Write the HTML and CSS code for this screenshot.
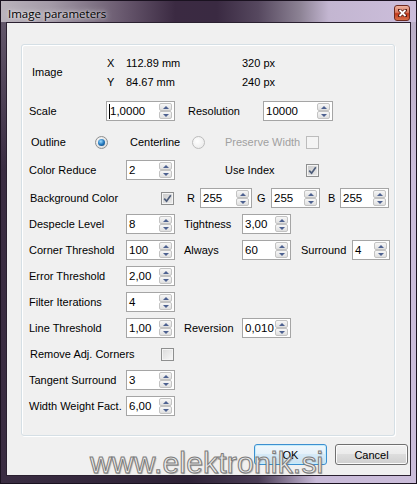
FILE: index.html
```html
<!DOCTYPE html>
<html>
<head>
<meta charset="utf-8">
<link rel="stylesheet" href="styles.css">
</head>
<body>
<div class="window">
  <div class="titlebar">
    <span class="title">Image parameters</span>
    <div class="close"><svg width="9" height="8" viewBox="0 0 9 8"><path d="M1.5 1 L7.5 7 M7.5 1 L1.5 7" stroke="#5a1d12" stroke-width="3.4" stroke-linecap="square"/><path d="M1.5 1 L7.5 7 M7.5 1 L1.5 7" stroke="#ffffff" stroke-width="1.8"/></svg></div>
  </div>
  <div class="client">
    <div class="group">
      <div class="imgblock">
        <div class="imglabel">Image</div>
        <div class="imglines">
          <div class="imgline"><span class="axis">X</span><span class="mm">112.89 mm</span><span>320 px</span></div>
          <div class="imgline"><span class="axis">Y</span><span class="mm">84.67 mm</span><span>240 px</span></div>
        </div>
      </div>

      <div class="row r-scale">
        <span class="lbl w77">Scale</span>
        <div class="spin w69"><span class="val"><i class="caret"></i>1,0000</span><span class="arrows"><b class="up"></b><b class="dn"></b></span></div>
        <span class="lbl w75 ml13">Resolution</span>
        <div class="spin w70"><span class="val">10000</span><span class="arrows"><b class="up"></b><b class="dn"></b></span></div>
      </div>

      <div class="row r-outline">
        <span class="lbl w66 pl2">Outline</span>
        <span class="radio on"></span>
        <span class="lbl w62 ml22">Centerline</span>
        <span class="radio dis"></span>
        <span class="lbl w81 ml20 disabled">Preserve Width</span>
        <span class="chk dis"></span>
      </div>

      <div class="row r-cr">
        <span class="lbl w97">Color Reduce</span>
        <div class="spin w49"><span class="val">2</span><span class="arrows"><b class="up"></b><b class="dn"></b></span></div>
        <span class="lbl w81 ml50">Use Index</span>
        <span class="chk on"><svg width="9" height="9" viewBox="0 0 9 9"><path d="M1.2 4.6 L3.6 7.2 L7.8 1.3" fill="none" stroke="#4e5d7a" stroke-width="1.7"/></svg></span>
      </div>

      <div class="row r-bg">
        <span class="lbl w132 pl1">Background Color</span>
        <span class="chk on"><svg width="9" height="9" viewBox="0 0 9 9"><path d="M1.2 4.6 L3.6 7.2 L7.8 1.3" fill="none" stroke="#4e5d7a" stroke-width="1.7"/></svg></span>
        <span class="lbl w13 ml13">R</span>
        <div class="spin w52"><span class="val">255</span><span class="arrows"><b class="up"></b><b class="dn"></b></span></div>
        <span class="lbl w14 ml5">G</span>
        <div class="spin w49"><span class="val">255</span><span class="arrows"><b class="up"></b><b class="dn"></b></span></div>
        <span class="lbl w12 ml8">B</span>
        <div class="spin w49"><span class="val">255</span><span class="arrows"><b class="up"></b><b class="dn"></b></span></div>
      </div>

      <div class="row std">
        <span class="lbl w97">Despecle Level</span>
        <div class="spin w49"><span class="val">8</span><span class="arrows"><b class="up"></b><b class="dn"></b></span></div>
        <span class="lbl w58 ml9">Tightness</span>
        <div class="spin w49"><span class="val">3,00</span><span class="arrows"><b class="up"></b><b class="dn"></b></span></div>
      </div>

      <div class="row std">
        <span class="lbl w97">Corner Threshold</span>
        <div class="spin w49"><span class="val">100</span><span class="arrows"><b class="up"></b><b class="dn"></b></span></div>
        <span class="lbl w58 ml9">Always</span>
        <div class="spin w49"><span class="val">60</span><span class="arrows"><b class="up"></b><b class="dn"></b></span></div>
        <span class="lbl w51 ml10">Surround</span>
        <div class="spin w38"><span class="val">4</span><span class="arrows"><b class="up"></b><b class="dn"></b></span></div>
      </div>

      <div class="row std">
        <span class="lbl w97">Error Threshold</span>
        <div class="spin w49"><span class="val">2,00</span><span class="arrows"><b class="up"></b><b class="dn"></b></span></div>
      </div>

      <div class="row std">
        <span class="lbl w97">Filter Iterations</span>
        <div class="spin w49"><span class="val">4</span><span class="arrows"><b class="up"></b><b class="dn"></b></span></div>
      </div>

      <div class="row std">
        <span class="lbl w97">Line Threshold</span>
        <div class="spin w49"><span class="val">1,00</span><span class="arrows"><b class="up"></b><b class="dn"></b></span></div>
        <span class="lbl w58 ml9">Reversion</span>
        <div class="spin w49"><span class="val">0,010</span><span class="arrows"><b class="up"></b><b class="dn"></b></span></div>
      </div>

      <div class="row std">
        <span class="lbl w132 pl1">Remove Adj. Corners</span>
        <span class="chk"></span>
      </div>

      <div class="row std">
        <span class="lbl w97">Tangent Surround</span>
        <div class="spin w49"><span class="val">3</span><span class="arrows"><b class="up"></b><b class="dn"></b></span></div>
      </div>

      <div class="row std">
        <span class="lbl w97">Width Weight Fact.</span>
        <div class="spin w49"><span class="val">6,00</span><span class="arrows"><b class="up"></b><b class="dn"></b></span></div>
      </div>
    </div>

    <div class="buttons">
      <div class="btn def">OK</div>
      <div class="btn">Cancel</div>
    </div>
  </div>
  <div class="watermark">www.elektronik.si</div>
</div>
</body>
</html>
```

FILE: styles.css
```css
html, body {
  margin: 0;
  padding: 0;
}
body {
  width: 417px;
  height: 484px;
  overflow: hidden;
  font-family: "Liberation Sans", Arial, sans-serif;
  font-size: 11px;
  color: #000;
  background: #1a1220;
}
.window {
  position: relative;
  width: 417px;
  height: 484px;
  box-sizing: border-box;
  border: 1px solid #1a1220;
  padding: 0 5px 7px 5px;
  display: flex;
  flex-direction: column;
  background:
    linear-gradient(180deg, rgba(160,152,168,0.45) 0%, rgba(0,0,0,0) 35%),
    linear-gradient(90deg, #3a2d42 0%, #2e2236 45%, #4a3c55 62%, #c8bad8 76%, #cbbdda 100%);
}
.titlebar {
  height: 21px;
  margin: 0 -5px;
  padding: 0 6px 0 7px;
  display: flex;
  justify-content: space-between;
  align-items: center;
  background: linear-gradient(90deg, #bab3bc 0%, #a39aa7 12%, #66566c 30%, #3b2a42 42%, #3a2a42 52%, #56485f 62%, #8c8294 72%, #c3b6d1 79%, #ccbedb 100%);
}
.title {
  font-family: "Open Sans", "Noto Sans", sans-serif;
  font-size: 11.5px;
  color: #000;
  margin-top: 3px;
  text-shadow: 0 0 6px rgba(255,255,255,0.9), 0 0 3px rgba(255,255,255,0.7);
}
.close {
  align-self: flex-start;
  margin-top: 4px;
  width: 16px;
  height: 16px;
  box-sizing: border-box;
  border: 1px solid #6e2a1f;
  border-radius: 3px;
  background: linear-gradient(#efb4a0 0%, #da7a60 45%, #c3391b 55%, #d9704a 100%);
  display: flex;
  align-items: center;
  justify-content: center;
}
.client {
  flex: 1;
  border: 1px solid #2a2030;
  background: #f0f0f0;
  padding: 21px 0 0 14px;
  display: flex;
  flex-direction: column;
}
.group {
  width: 374px;
  height: 392px;
  box-sizing: border-box;
  border: 1px solid #d5dfe5;
  border-radius: 3px;
  box-shadow: inset 1px 1px 0 #ffffff, 1px 1px 0 #ffffff;
  padding: 8px 0 0 7px;
  display: flex;
  flex-direction: column;
}
.imgblock {
  display: flex;
  align-items: center;
  height: 38px;
}
.imglabel {
  width: 75px;
  padding-left: 3px;
}
.imglines {
  display: flex;
  flex-direction: column;
}
.imgline {
  height: 19px;
  display: flex;
  align-items: center;
}
.axis { width: 19px; }
.mm { width: 116px; }

.row {
  height: 20px;
  display: flex;
  align-items: center;
  flex-shrink: 0;
}
.r-scale { margin-top: 10px; }
.r-outline { margin-top: 11px; }
.r-cr { margin-top: 8px; }
.r-bg { margin-top: 8px; }
.std { margin-top: 6px; }

.lbl {
  box-sizing: border-box;
  white-space: nowrap;
  flex-shrink: 0;
}
.disabled { color: #a0a0a0; }
.w12 { width: 12px; }
.w13 { width: 13px; }
.w14 { width: 14px; }
.w51 { width: 51px; }
.w58 { width: 58px; }
.w62 { width: 62px; }
.w66 { width: 66px; }
.w75 { width: 75px; }
.w77 { width: 77px; }
.w81 { width: 81px; }
.w97 { width: 97px; }
.w132 { width: 132px; }
.pl1 { padding-left: 1px; }
.pl2 { padding-left: 2px; }
.ml5 { margin-left: 5px; }
.ml8 { margin-left: 8px; }
.ml9 { margin-left: 9px; }
.ml10 { margin-left: 10px; }
.ml13 { margin-left: 13px; }
.ml20 { margin-left: 20px; }
.ml22 { margin-left: 22px; }
.ml50 { margin-left: 50px; }

.spin {
  height: 20px;
  box-sizing: border-box;
  border: 1px solid #a5a5a5;
  background: #ffffff;
  display: flex;
  align-items: stretch;
  flex-shrink: 0;
}
.spin.w38 { width: 38px; }
.spin.w49 { width: 49px; }
.spin.w52 { width: 52px; }
.spin.w69 { width: 69px; }
.spin.w70 { width: 70px; }
.val {
  flex: 1;
  display: flex;
  align-items: center;
  padding-left: 2px;
  font-size: 11.5px;
  overflow: hidden;
  white-space: nowrap;
}
.caret {
  display: inline-block;
  width: 1px;
  height: 15px;
  background: #000;
}
.arrows {
  width: 13px;
  margin: 1px 2px 1px 0;
  display: flex;
  flex-direction: column;
}
.arrows b {
  flex: 1;
  box-sizing: border-box;
  border: 1px solid #c3c3c3;
  border-radius: 2px;
  background: linear-gradient(#f7f7f7, #dfdfdf);
  display: flex;
  align-items: center;
  justify-content: center;
}
.arrows b::after {
  content: "";
  width: 0;
  height: 0;
  border-left: 3px solid transparent;
  border-right: 3px solid transparent;
}
.arrows .up::after { border-bottom: 3px solid #4d6190; }
.arrows .dn::after { border-top: 3px solid #4d6190; }

.chk {
  width: 13px;
  height: 13px;
  box-sizing: border-box;
  border: 1px solid #8e8f8f;
  background: linear-gradient(135deg, #dadada, #f8f8f8);
  box-shadow: inset 0 0 0 1px #f4f4f4;
  display: flex;
  align-items: center;
  justify-content: center;
  flex-shrink: 0;
}
.chk.on {
  background: linear-gradient(135deg, #c9c9c9, #ececec);
}
.chk.dis {
  border-color: #bcbcbc;
  background: #f4f4f4;
}
.radio {
  width: 13px;
  height: 13px;
  box-sizing: border-box;
  border-radius: 50%;
  border: 1px solid #8e8f8f;
  background: radial-gradient(circle at 40% 40%, #ffffff, #d2d2d2);
  display: flex;
  align-items: center;
  justify-content: center;
  flex-shrink: 0;
}
.radio.on::after {
  content: "";
  width: 7px;
  height: 7px;
  border-radius: 50%;
  background: radial-gradient(circle at 40% 35%, #9edcff 0%, #2478bd 50%, #0b3a68 100%);
}
.radio.dis {
  border-color: #bcbcbc;
  background: radial-gradient(circle at 40% 40%, #ffffff, #e6e6e6);
}

.buttons {
  margin-top: 8px;
  width: 387px;
  display: flex;
  justify-content: flex-end;
  gap: 8px;
}
.btn {
  width: 73px;
  height: 21px;
  box-sizing: border-box;
  border: 1px solid #707070;
  border-radius: 3px;
  background: linear-gradient(#f2f2f2 0%, #ebebeb 45%, #dddddd 50%, #cfcfcf 100%);
  box-shadow: inset 0 0 0 1px #fbfbfb;
  display: flex;
  align-items: center;
  justify-content: center;
}
.btn.def {
  border-color: #3c8fd0;
  box-shadow: inset 0 0 0 1px #c4ecfb;
  background: linear-gradient(#f0f7fc 0%, #e6f2fa 45%, #d6eaf7 50%, #c9e2f3 100%);
}
.watermark {
  position: absolute;
  left: 89px;
  top: 447px;
  font-family: "Liberation Sans", Arial, sans-serif;
  font-size: 30px;
  line-height: 30px;
  letter-spacing: 0.2px;
  color: #ececec;
  -webkit-text-stroke: 1px #7c7c7c;
  text-shadow: 1px 1px 1px rgba(0,0,0,0.3);
  white-space: nowrap;
}
```
